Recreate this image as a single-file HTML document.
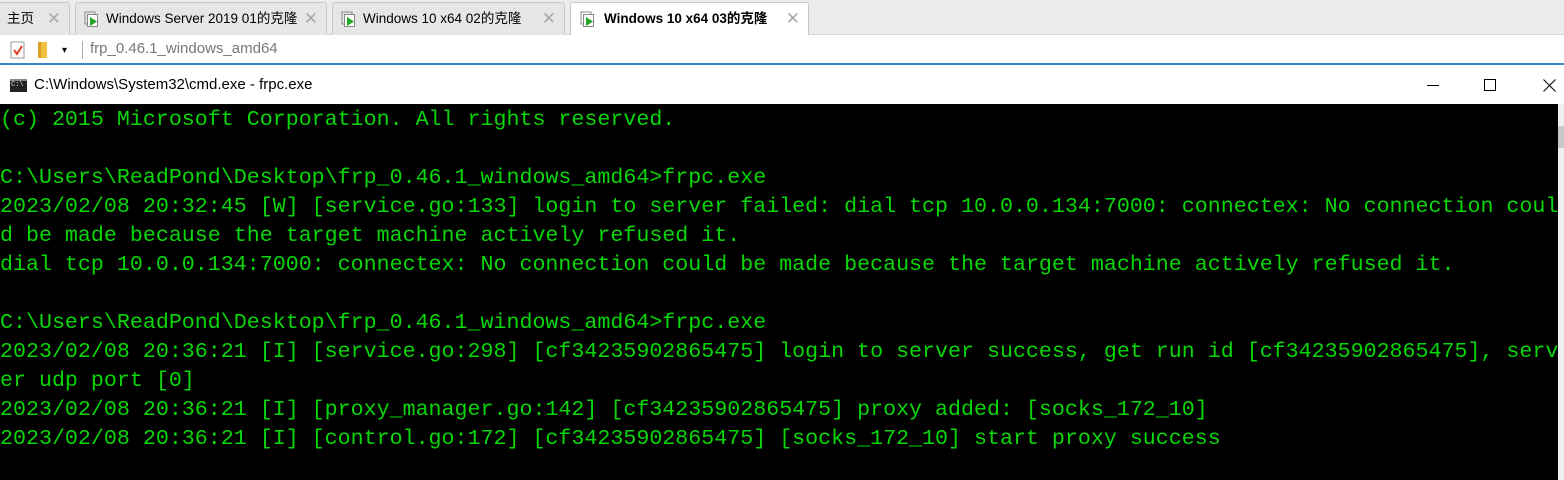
<!DOCTYPE html>
<html><head><meta charset="utf-8"><style>
*{margin:0;padding:0;box-sizing:border-box}
body{width:1564px;height:480px;overflow:hidden;background:#fff;font-family:"Liberation Sans","Noto Sans CJK SC",sans-serif;position:relative}
.tabs{position:absolute;left:0;top:0;width:1564px;height:35px;background:#ececec;border-bottom:1px solid #d8d8d8}
.tab{position:absolute;top:2px;height:33px;background:#e6e6e6;border:1px solid #c8c8c8;border-bottom:none;border-radius:3px 3px 0 0;font-size:13.5px;line-height:31px;color:#000;white-space:nowrap}
.tab.act{background:#fff;font-weight:bold;height:34px}
.tab .x{position:absolute;right:8px;top:0;color:#aaa;font-size:17px;font-weight:normal}
.ico{position:absolute;left:8px;top:8px;width:16px;height:16px}
.tb{position:absolute;top:35px;left:0;width:1564px;height:30px;background:#fff;border-bottom:2px solid #3a86c8}
.title{position:absolute;top:67px;left:0;width:1564px;height:37px;background:#fff;font-size:15px}
.con{position:absolute;top:104px;left:0;width:1558px;height:376px;background:#000;font-family:"Liberation Mono",monospace;font-size:21.65px;line-height:29px;padding-top:1px;color:#0ad60a;white-space:pre;overflow:hidden}
.sb{position:absolute;top:104px;left:1558px;width:6px;height:376px;background:#f0f0f0}
</style></head><body>
<div class="tabs">
<div class="tab" style="left:-2px;width:72px;padding-left:8px">主页<span class="x">✕</span></div>
<div class="tab" style="left:75px;width:252px;padding-left:30px"><svg class="ico" viewBox="0 0 16 16"><rect x="1" y="1" width="10" height="12" fill="none" stroke="#888"/><rect x="3.5" y="3.5" width="10" height="12" fill="#fff" stroke="#888"/><path d="M6 6 L13 10.5 L6 15Z" fill="#2a2"/></svg>Windows Server 2019 01的克隆<span class="x">✕</span></div>
<div class="tab" style="left:332px;width:233px;padding-left:30px"><svg class="ico" viewBox="0 0 16 16"><rect x="1" y="1" width="10" height="12" fill="none" stroke="#888"/><rect x="3.5" y="3.5" width="10" height="12" fill="#fff" stroke="#888"/><path d="M6 6 L13 10.5 L6 15Z" fill="#2a2"/></svg>Windows 10 x64 02的克隆<span class="x">✕</span></div>
<div class="tab act" style="left:570px;width:239px;padding-left:33px"><svg class="ico" style="left:9px" viewBox="0 0 16 16"><rect x="1" y="1" width="10" height="12" fill="none" stroke="#888"/><rect x="3.5" y="3.5" width="10" height="12" fill="#fff" stroke="#888"/><path d="M6 6 L13 10.5 L6 15Z" fill="#2a2"/></svg>Windows 10 x64 03的克隆<span class="x">✕</span></div>
</div>
<div class="tb">
<svg style="position:absolute;left:9px;top:6px" width="18" height="19" viewBox="0 0 18 19"><rect x="2" y="1" width="13" height="16" fill="#fff" stroke="#999"/><path d="M5 9 L8 13 L13 5" fill="none" stroke="#e04020" stroke-width="2"/></svg>
<div style="position:absolute;left:38px;top:7px;width:9px;height:16px;background:#f0c040;border-left:3px solid #d9a020"></div>
<div style="position:absolute;left:62px;top:10px;font-size:10px">▾</div>
<div style="position:absolute;left:82px;top:6px;width:1px;height:18px;background:#aaa"></div>
<div style="position:absolute;left:90px;top:5px;font-size:15px;color:#777">frp_0.46.1_windows_amd64</div>
</div>
<div class="title">
<div style="position:absolute;left:10px;top:12px;width:17px;height:13px;background:#222;border-top:2px solid #888"><span style="position:absolute;left:1px;top:0;font-size:7px;color:#ddd;font-family:'Liberation Mono'">C:\</span></div>
<div style="position:absolute;left:34px;top:9px">C:\Windows\System32\cmd.exe - frpc.exe</div>
<div style="position:absolute;left:1427px;top:18px;width:12px;height:1px;background:#000"></div>
<div style="position:absolute;left:1484px;top:12px;width:12px;height:12px;border:1px solid #000"></div>
<svg style="position:absolute;left:1543px;top:12px" width="13" height="13"><path d="M0.5 0.5L12.5 12.5M12.5 0.5L0.5 12.5" stroke="#000"/></svg>
</div>
<div class="con">(c) 2015 Microsoft Corporation. All rights reserved.

C:\Users\ReadPond\Desktop\frp_0.46.1_windows_amd64>frpc.exe
2023/02/08 20:32:45 [W] [service.go:133] login to server failed: dial tcp 10.0.0.134:7000: connectex: No connection coul
d be made because the target machine actively refused it.
dial tcp 10.0.0.134:7000: connectex: No connection could be made because the target machine actively refused it.

C:\Users\ReadPond\Desktop\frp_0.46.1_windows_amd64>frpc.exe
2023/02/08 20:36:21 [I] [service.go:298] [cf34235902865475] login to server success, get run id [cf34235902865475], serv
er udp port [0]
2023/02/08 20:36:21 [I] [proxy_manager.go:142] [cf34235902865475] proxy added: [socks_172_10]
2023/02/08 20:36:21 [I] [control.go:172] [cf34235902865475] [socks_172_10] start proxy success</div>
<div class="sb"><div style="position:absolute;top:22px;left:0;width:6px;height:22px;background:#c8c8c8"></div></div>
</body></html>
